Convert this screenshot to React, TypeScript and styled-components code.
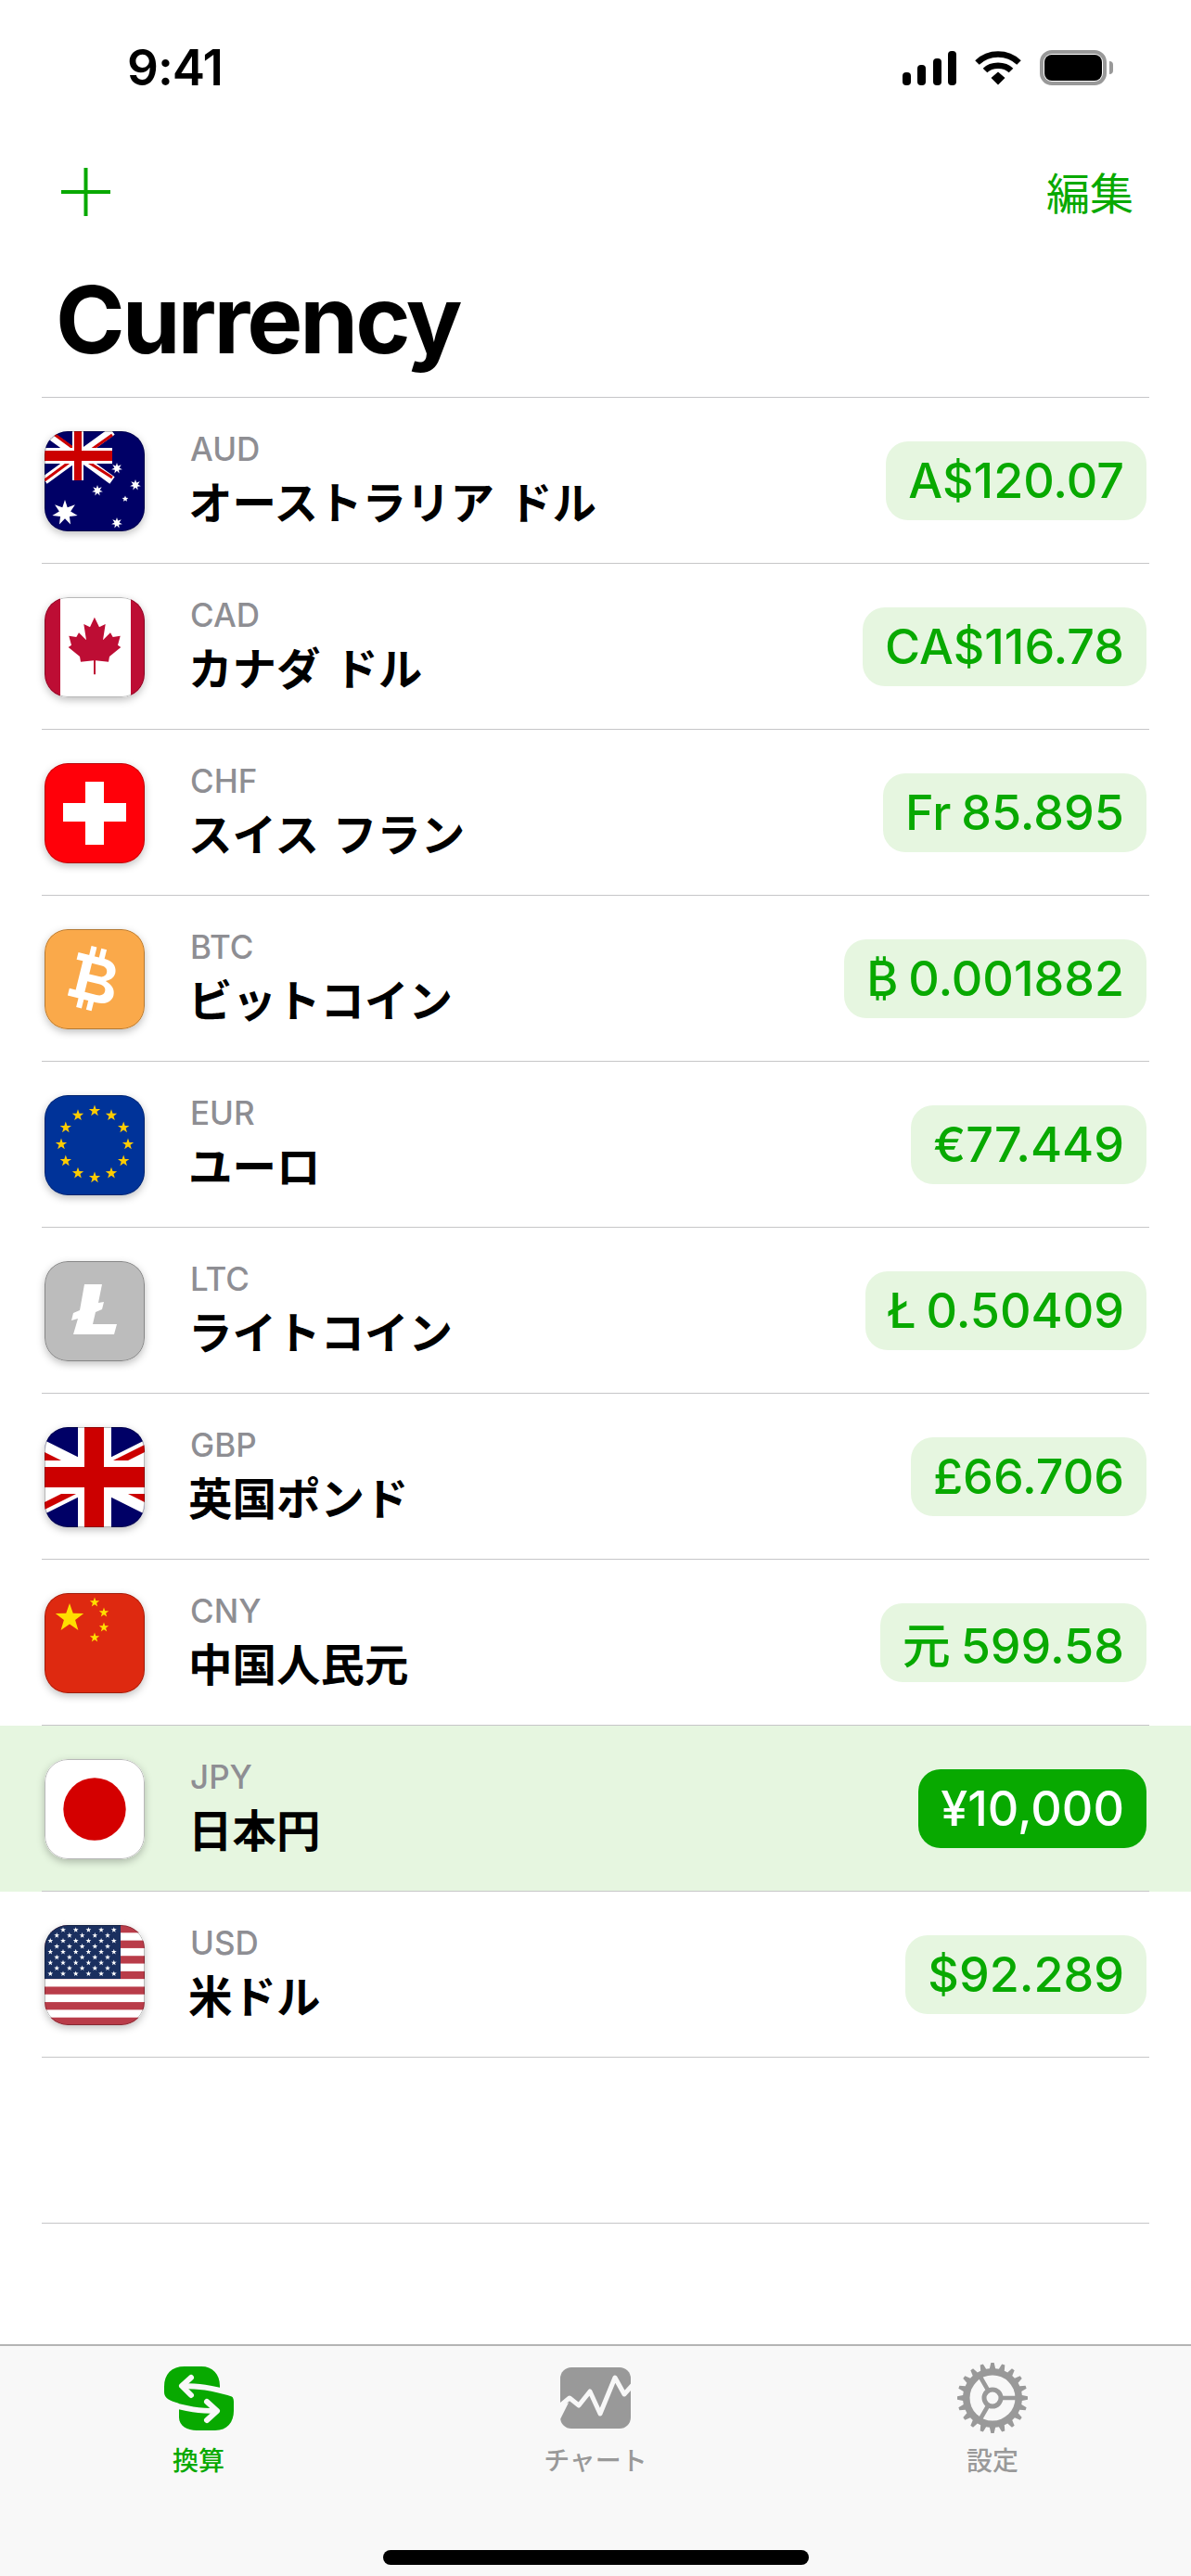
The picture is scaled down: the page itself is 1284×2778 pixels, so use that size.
import React from "react";
import styled, { createGlobalStyle } from "styled-components";

const GREEN = "#08a900";
const TINT = "#e6f6e0";
const GREY = "#8e8e93";
const LINE = "#c6c6c8";
const SANS = `Inter, "Noto Sans CJK JP", sans-serif`;
const CJK = `"Noto Sans CJK JP", Inter, sans-serif`;

const starPoints = (cx: number, cy: number, r: number, n = 5, inner = 0.4) => {
  const pts: string[] = [];
  for (let i = 0; i < n * 2; i++) {
    const a = -Math.PI / 2 + (i * Math.PI) / n;
    const rad = i % 2 === 0 ? r : r * inner;
    pts.push(`${(cx + rad * Math.cos(a)).toFixed(2)},${(cy + rad * Math.sin(a)).toFixed(2)}`);
  }
  return pts.join(" ");
};

const Aud = () => (
  <svg viewBox="0 0 108 108">
    <rect width="108" height="108" fill="#000066" />
    <path d="M0 0 L73 53 M73 0 L0 53" stroke="#fff" strokeWidth="9" />
    <path d="M6 0 L36 22 M73 4 L42 26 M0 53 L30 31 M73 50 L42 30" stroke="#cc0000" strokeWidth="3" />
    <rect x="30" width="12" height="53" fill="#fff" />
    <rect y="18" width="73" height="17" fill="#fff" />
    <rect x="32" width="8" height="53" fill="#cc0000" />
    <rect y="21" width="73" height="11" fill="#cc0000" />
    <g fill="#fff">
      <polygon points={starPoints(22, 88, 14, 7, 0.45)} />
      <polygon points={starPoints(78, 40, 6, 7, 0.45)} />
      <polygon points={starPoints(98, 58, 6, 7, 0.45)} />
      <polygon points={starPoints(57, 64, 6, 7, 0.45)} />
      <polygon points={starPoints(87, 73, 3.5, 5, 0.45)} />
      <polygon points={starPoints(78, 99, 6, 7, 0.45)} />
    </g>
  </svg>
);

const leafRight = "53.9,21.7 59,32.3 65.7,29 63,46.3 71,38.3 73.7,43 81.7,41.7 79,51.7 82.3,54 70,64 69,69.7 55,68.3 55,83.3";
const leafLeft = "53,83.3 53,68.3 39,69.7 38,64 25.7,54 29,51.7 26.3,41.7 34.3,43 37,38.3 45,46.3 42.3,29 49,32.3";

const Cad = () => (
  <svg viewBox="0 0 108 108">
    <rect width="108" height="108" fill="#fff" />
    <rect width="17" height="108" fill="#bd0d34" />
    <rect x="93" width="15" height="108" fill="#bd0d34" />
    <polygon points={`${leafRight} ${leafLeft}`} fill="#bd0d34" />
  </svg>
);

const Chf = () => (
  <svg viewBox="0 0 108 108">
    <rect width="108" height="108" fill="#ff0009" />
    <rect x="20" y="43" width="68" height="20" fill="#fff" />
    <rect x="44" y="20" width="20" height="68" fill="#fff" />
  </svg>
);

const Btc = () => (
  <svg viewBox="0 0 108 108">
    <rect width="108" height="108" fill="#faa94a" />
    <g transform="rotate(14 54 54)" fill="#fff">
      <path
        fillRule="evenodd"
        d="M30 30 H60 C70 30 74 37 74 42 C74 48 70 51 66 53 C73 55 78 59 78 66 C78 73 72 78 62 78 H30 V70 H37 V38 H30 Z M47 38 V50 H58 C63 50 65 47 65 44 C65 41 63 38 58 38 Z M47 58 V70 H60 C65 70 68 68 68 64 C68 60 65 58 60 58 Z"
      />
      <rect x="42" y="20" width="6" height="12" />
      <rect x="53" y="20" width="6" height="12" />
      <rect x="42" y="76" width="6" height="12" />
      <rect x="53" y="76" width="6" height="12" />
    </g>
  </svg>
);

const Eur = () => (
  <svg viewBox="0 0 108 108">
    <rect width="108" height="108" fill="#003399" />
    {Array.from({ length: 12 }, (_, i) => {
      const a = (i * Math.PI) / 6;
      return (
        <polygon
          key={i}
          points={starPoints(54 + 36 * Math.sin(a), 53 - 36 * Math.cos(a), 6.5)}
          fill="#ffcc00"
        />
      );
    })}
  </svg>
);

const Ltc = () => (
  <svg viewBox="0 0 108 108">
    <rect width="108" height="108" fill="#bcbcbc" />
    <polygon
      points="43,25 62,25 58,45 64,44 62,52 55,55 52,68 78,68 75,79 31,79 36,62 29,64 31,56 38,53"
      fill="#fff"
    />
  </svg>
);

const Gbp = () => (
  <svg viewBox="0 0 108 108">
    <rect width="108" height="108" fill="#000066" />
    <path d="M-54 0 L162 108 M-54 108 L162 0" stroke="#fff" strokeWidth="23" />
    <g fill="#cc0000">
      <polygon points="0,27 54,54 36,54 0,36" />
      <polygon points="108,19 108,27 54,54 54,46" />
      <polygon points="0,81 54,54 54,62 0,89" />
      <polygon points="108,81 54,54 72,54 108,72" />
    </g>
    <rect x="36" width="36" height="108" fill="#fff" />
    <rect y="36" width="108" height="36" fill="#fff" />
    <rect x="43" width="21" height="108" fill="#cc0000" />
    <rect y="43" width="108" height="22" fill="#cc0000" />
  </svg>
);

const Cny = () => (
  <svg viewBox="0 0 108 108">
    <rect width="108" height="108" fill="#de2910" />
    <g fill="#ffde00">
      <polygon points={starPoints(27, 27, 16)} />
      <polygon points={starPoints(54, 10, 5.5)} />
      <polygon points={starPoints(64, 21, 5.5)} />
      <polygon points={starPoints(64, 37, 5.5)} />
      <polygon points={starPoints(54, 48, 5.5)} />
    </g>
  </svg>
);

const Jpy = () => (
  <svg viewBox="0 0 108 108">
    <rect width="108" height="108" fill="#fff" />
    <circle cx="54" cy="54" r="33.7" fill="#d40000" />
  </svg>
);

const Usd = () => (
  <svg viewBox="0 0 108 108">
    <rect width="108" height="108" fill="#fff" />
    {Array.from({ length: 7 }, (_, i) => (
      <rect key={i} y={(i * 2 * 108) / 13} width="108" height={108 / 13} fill="#b93c49" />
    ))}
    <rect width="82" height="58" fill="#1a2f5f" />
    {Array.from({ length: 9 }, (_, row) =>
      Array.from({ length: row % 2 === 0 ? 6 : 5 }, (_, col) => (
        <polygon
          key={`${row}-${col}`}
          points={starPoints((row % 2 === 0 ? 6.3 : 13.2) + 13.7 * col, 5.3 + 5.9 * row, 3.1)}
          fill="#fff"
        />
      ))
    )}
  </svg>
);

const rows = [
  { code: "AUD", name: "オーストラリア ドル", value: "A$120.07", flag: <Aud /> },
  { code: "CAD", name: "カナダ ドル", value: "CA$116.78", flag: <Cad /> },
  { code: "CHF", name: "スイス フラン", value: "Fr 85.895", flag: <Chf /> },
  { code: "BTC", name: "ビットコイン", value: "₿ 0.001882", flag: <Btc /> },
  { code: "EUR", name: "ユーロ", value: "€77.449", flag: <Eur /> },
  { code: "LTC", name: "ライトコイン", value: "Ł 0.50409", flag: <Ltc /> },
  { code: "GBP", name: "英国ポンド", value: "£66.706", flag: <Gbp /> },
  { code: "CNY", name: "中国人民元", value: "元 599.58", flag: <Cny /> },
  { code: "JPY", name: "日本円", value: "¥10,000", flag: <Jpy />, active: true },
  { code: "USD", name: "米ドル", value: "$92.289", flag: <Usd /> },
];

const gearPath = () => {
  const teeth = 20;
  const pts: string[] = [];
  for (let i = 0; i < teeth; i++) {
    const a = (i * 2 * Math.PI) / teeth;
    const w = Math.PI / teeth;
    [
      [32, -w * 0.62],
      [38, -w * 0.28],
      [38, w * 0.28],
      [32, w * 0.62],
    ].forEach(([r, d]) => {
      pts.push(`${(38 + r * Math.sin(a + d)).toFixed(2)},${(38 - r * Math.cos(a + d)).toFixed(2)}`);
    });
  }
  return pts.join(" ");
};

const ConvertIcon = () => (
  <svg width="75" height="69" viewBox="0 0 75 69">
    <path
      d="M60 21 C60 8 52 0 40 0 H22 C8 0 0 8 0 22 V28 C0 34 6 37 16 40 L16 55 C16 64 25 69 35 69 H55 C68 69 75 60 75 48 V38 C75 32 70 28 60 25 Z"
      fill={GREEN}
    />
    <g fill="none" stroke="#f8f8f8" strokeWidth="6" strokeLinecap="round" strokeLinejoin="round">
      <path d="M19 21 C35 21 50 22 78 31" strokeLinecap="butt" />
      <path d="M29 12 L19 21 L29 31" />
      <path d="M57 48 C40 48 25 47 -3 38" strokeLinecap="butt" />
      <path d="M46 38 L57 48 L46 58" />
    </g>
  </svg>
);

const ChartIcon = () => (
  <svg width="76" height="66" viewBox="0 0 76 66">
    <rect width="76" height="66" rx="12" fill="#999" />
    <polygon points="-1,41 -1,58 9,38" fill="#f8f8f8" />
    <path
      d="M-2 43 L10 33 L20 41 L32 26 L43 50 L59 11 L69 29 L78 19"
      fill="none"
      stroke="#f8f8f8"
      strokeWidth="5"
      strokeLinejoin="round"
    />
  </svg>
);

const GearIcon = () => (
  <svg width="76" height="76" viewBox="0 0 76 76">
    <polygon points={gearPath()} fill="#999" />
    <circle cx="38" cy="38" r="24.5" fill="#f8f8f8" />
    <g stroke="#999" strokeWidth="4.5">
      <path d="M38 38 H64 M38 38 L25 15.5 M38 38 L25 60.5" />
    </g>
    <circle cx="38" cy="38" r="9" fill="#f8f8f8" stroke="#999" strokeWidth="5" />
  </svg>
);

const App: React.FC = () => (
  <Page>
    <GlobalStyle />
    <StatusBar>
      <Time>9:41</Time>
      <StatusIcons>
        <svg width="59" height="37" viewBox="0 0 59 37" fill="#000">
          <rect x="0" y="23" width="9" height="14" rx="4" />
          <rect x="16" y="15" width="9" height="22" rx="4" />
          <rect x="33" y="8" width="9" height="29" rx="4" />
          <rect x="49" y="0" width="9" height="37" rx="4" />
        </svg>
        <svg width="50" height="37" viewBox="0 0 50 37">
          <g fill="none" stroke="#000" strokeWidth="6.5">
            <path d="M2.5 12.5 C15 0.5 35 0.5 47.5 12.5" />
            <path d="M11 21 C18 14 32 14 39 21" />
          </g>
          <polygon points="17.5,29 25,22.5 32.5,29 25,36.5" fill="#000" />
        </svg>
        <Battery>
          <BatteryFill />
        </Battery>
      </StatusIcons>
    </StatusBar>
    <NavBar>
      <svg width="53" height="52" viewBox="0 0 53 52">
        <path d="M0 26 H53 M26.5 0 V52" stroke={GREEN} strokeWidth="4" strokeLinecap="round" />
      </svg>
      <EditButton>編集</EditButton>
    </NavBar>
    <Title>Currency</Title>
    <List>
      {rows.map((row) => (
        <Row key={row.code} $active={row.active}>
          <RowInner>
            <Flag>{row.flag}</Flag>
            <Labels>
              <Code>{row.code}</Code>
              <Name>{row.name}</Name>
            </Labels>
            <Amount $active={row.active}>{row.value}</Amount>
          </RowInner>
        </Row>
      ))}
      <Row>
        <RowInner />
      </Row>
    </List>
    <TabBar>
      <Tabs>
        <Tab $active>
          <TabIcon>
            <ConvertIcon />
          </TabIcon>
          <TabLabel>換算</TabLabel>
        </Tab>
        <Tab>
          <TabIcon>
            <ChartIcon />
          </TabIcon>
          <TabLabel>チャート</TabLabel>
        </Tab>
        <Tab>
          <TabIcon>
            <GearIcon />
          </TabIcon>
          <TabLabel>設定</TabLabel>
        </Tab>
      </Tabs>
      <HomeIndicator />
    </TabBar>
  </Page>
);

export default App;

const GlobalStyle = createGlobalStyle`
  html, body {
    margin: 0;
    padding: 0;
    background: #fff;
  }
`;

const Page = styled.div`
  width: 1284px;
  height: 2778px;
  display: flex;
  flex-direction: column;
  overflow: hidden;
  font-family: ${SANS};
  color: #000;
`;

const StatusBar = styled.div`
  height: 130px;
  box-sizing: border-box;
  display: flex;
  align-items: flex-start;
  justify-content: space-between;
  padding: 54px 91px 0 137px;
`;

const Time = styled.div`
  font-size: 53px;
  line-height: 38px;
  font-weight: 600;
  letter-spacing: -1px;
`;

const StatusIcons = styled.div`
  display: flex;
  align-items: center;
  gap: 19px;
`;

const Battery = styled.div`
  position: relative;
  width: 72px;
  height: 38px;
  box-sizing: border-box;
  border: 4px solid #999;
  border-radius: 13px;
  padding: 1px;
  margin-left: 1px;

  &::after {
    content: "";
    position: absolute;
    right: -11px;
    top: 8px;
    width: 4px;
    height: 14px;
    background: #999;
    border-radius: 0 4px 4px 0;
  }
`;

const BatteryFill = styled.div`
  width: 100%;
  height: 100%;
  background: #000;
  border-radius: 8px;
`;

const NavBar = styled.div`
  height: 150px;
  box-sizing: border-box;
  display: flex;
  align-items: flex-start;
  justify-content: space-between;
  padding: 51px 62px 0 66px;
`;

const EditButton = styled.div`
  font-family: ${CJK};
  font-size: 47px;
  line-height: 50px;
  color: ${GREEN};
`;

const Title = styled.h1`
  margin: 0 45px;
  height: 149px;
  padding: 9px 0 0 15px;
  box-sizing: border-box;
  border-bottom: 1px solid ${LINE};
  font-size: 101px;
  line-height: 110px;
  font-weight: 700;
  letter-spacing: -3px;
`;

const List = styled.div`
  flex: 1;
`;

const Row = styled.div<{ $active?: boolean }>`
  background: ${(p) => (p.$active ? TINT : "transparent")};
`;

const RowInner = styled.div`
  height: 179px;
  box-sizing: border-box;
  margin: 0 45px;
  padding: 1px 3px 0;
  border-bottom: 1px solid ${LINE};
  display: flex;
  align-items: center;
`;

const Flag = styled.div`
  position: relative;
  width: 108px;
  height: 108px;
  flex: none;
  border-radius: 25px;
  overflow: hidden;
  box-shadow: 0 3px 9px rgba(0, 0, 0, 0.25);

  svg {
    display: block;
    width: 108px;
    height: 108px;
  }

  &::after {
    content: "";
    position: absolute;
    inset: 0;
    border: 1px solid rgba(0, 0, 0, 0.28);
    border-radius: 25px;
  }
`;

const Labels = styled.div`
  margin-left: 49px;
  padding-top: 3px;
  flex: 1;
  display: flex;
  flex-direction: column;
`;

const Code = styled.div`
  font-size: 35px;
  line-height: 40px;
  font-weight: 500;
  color: ${GREY};
`;

const Name = styled.div`
  font-family: ${CJK};
  font-size: 47.5px;
  line-height: 72px;
  font-weight: 700;
  word-spacing: 4px;
  margin-left: -2px;
`;

const Amount = styled.div<{ $active?: boolean }>`
  height: 85px;
  box-sizing: border-box;
  padding: 0 24px;
  display: flex;
  align-items: center;
  border-radius: 24px;
  font-size: 52px;
  font-weight: 550;
  word-spacing: -3px;
  color: ${(p) => (p.$active ? "#fff" : GREEN)};
  background: ${(p) => (p.$active ? GREEN : TINT)};
`;

const TabBar = styled.div`
  height: 250px;
  box-sizing: border-box;
  border-top: 2px solid #b4b4b4;
  background: #f8f8f8;
  display: flex;
  flex-direction: column;
  align-items: center;
`;

const Tabs = styled.div`
  width: 100%;
  display: grid;
  grid-template-columns: repeat(3, 428px);
  padding-top: 18px;
`;

const Tab = styled.div<{ $active?: boolean }>`
  display: flex;
  flex-direction: column;
  align-items: center;
  color: ${(p) => (p.$active ? GREEN : "#999")};
`;

const TabIcon = styled.div`
  height: 76px;
  display: flex;
  align-items: center;
  justify-content: center;
`;

const TabLabel = styled.div`
  font-family: ${CJK};
  font-size: 28px;
  line-height: 40px;
  margin-top: 8px;
  font-weight: 500;
`;

const HomeIndicator = styled.div`
  width: 459px;
  height: 16px;
  margin-top: 78px;
  background: #000;
  border-radius: 8px;
`;
